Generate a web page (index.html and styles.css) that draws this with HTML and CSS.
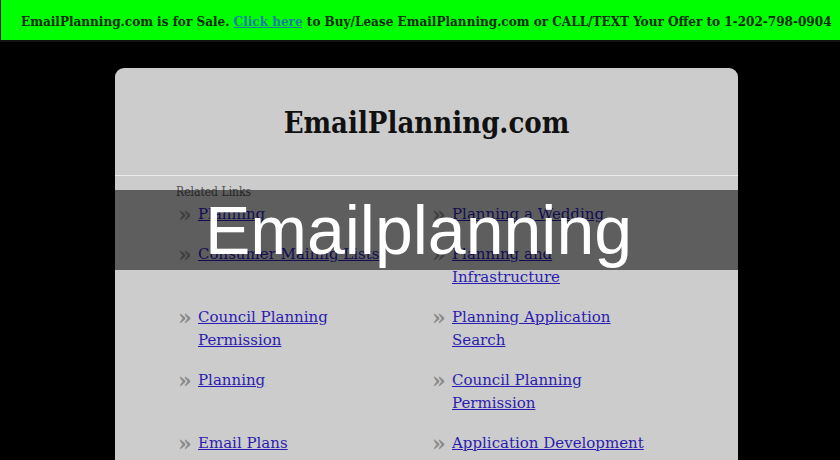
FILE: index.html
```html
<!DOCTYPE html>
<html>
<head>
<meta charset="utf-8">
<link rel="stylesheet" href="styles.css">
</head>
<body>
<div class="topbar">EmailPlanning.com is for Sale. <a href="#">Click here</a> to Buy/Lease EmailPlanning.com or CALL/TEXT Your Offer to 1-202-798-0904</div>
<div class="card">
  <div class="head"><h1>EmailPlanning.com</h1></div>
  <div class="body">
    <div class="related">Related Links</div>
    <ul class="links">
      <li><span class="arr">»</span><a href="#">Planning</a></li>
      <li><span class="arr">»</span><a href="#">Planning a Wedding</a></li>
      <li><span class="arr">»</span><a href="#">Consumer Mailing Lists</a></li>
      <li><span class="arr">»</span><a href="#">Planning and Infrastructure</a></li>
      <li><span class="arr">»</span><a href="#">Council Planning Permission</a></li>
      <li><span class="arr">»</span><a href="#">Planning Application Search</a></li>
      <li><span class="arr">»</span><a href="#">Planning</a></li>
      <li><span class="arr">»</span><a href="#">Council Planning Permission</a></li>
      <li><span class="arr">»</span><a href="#">Email Plans</a></li>
      <li><span class="arr">»</span><a href="#">Application Development</a></li>
    </ul>
  </div>
</div>
<div class="overlay"><span>Emailplanning</span></div>
</body>
</html>
```
FILE: styles.css
```css
html, body { margin: 0; padding: 0; }
body {
  background: #000;
  width: 840px;
  height: 460px;
  overflow: hidden;
  position: relative;
  font-family: "DejaVu Serif Condensed", "DejaVu Serif", serif;
}
.topbar {
  background: #00ff00;
  height: 40px;
  border-bottom: 2px solid #111;
  border-left: 1px solid #111;
  box-sizing: content-box;
  padding-left: 20px;
  font-weight: bold;
  font-size: 13.4px;
  line-height: 42px;
  color: #0f2a0f;
  white-space: nowrap;
}
.topbar a { color: #1a7fa0; }
.card {
  margin: 26px 0 0 115px;
  width: 623px;
  height: 400px;
  background: #cccccc;
  border-radius: 9px 9px 0 0;
}
.head {
  height: 107px;
  border-bottom: 1px solid #ececec;
  display: flex;
  align-items: center;
  justify-content: center;
}
.head h1 {
  margin: 2px 0 0 0;
  font-size: 29px;
  font-weight: bold;
  color: #111;
}
.body { padding: 9px 0 0 61px; }
.related {
  font-size: 12px;
  color: #555;
  line-height: 14px;
  margin-bottom: 4px;
}
.links {
  list-style: none;
  margin: 0;
  padding: 0 0 0 2px;
  display: grid;
  grid-template-columns: 254px 254px;
  row-gap: 17px;
}
.links li {
  display: flex;
  align-items: flex-start;
  font-family: "DejaVu Serif", serif;
  font-size: 15px;
  line-height: 23px;
}
.arr {
  width: 20px;
  flex: none;
  color: #8a8a8a;
  font-weight: bold;
  font-size: 22px;
  line-height: 23px;
}
.links a {
  color: #2a1cb0;
  width: 200px;
}
.overlay {
  position: absolute;
  left: 0;
  right: 0;
  top: 190px;
  height: 80px;
  background: rgba(0, 0, 0, 0.54);
  display: flex;
  align-items: center;
  justify-content: center;
}
.overlay span {
  font-family: "Liberation Sans", Arial, sans-serif;
  font-size: 68px;
  color: #fff;
  margin-left: -3px;
}
```
